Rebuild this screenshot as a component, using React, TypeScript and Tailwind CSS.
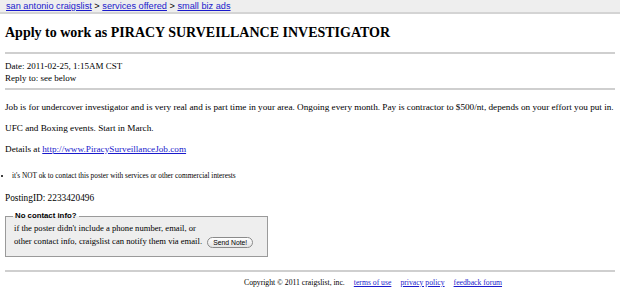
import React from "react";

const serif = "font-['Liberation_Serif','Times_New_Roman',serif]";
const sans = "font-['Liberation_Sans',Arial,sans-serif]";

const App: React.FC = () => {
  return (
    <div className={`w-[620px] h-[305px] bg-white text-black ${serif} overflow-hidden`}>
      {/* breadcrumb bar */}
      <div className={`h-[14px] bg-[#eeeeee] border-b-2 border-[#d4d4d4] px-[6px] ${sans} text-[9.2px] leading-[12px]`}>
        <a className="text-[#1a1acc] underline" href="#">san antonio craigslist</a>
        {" > "}
        <a className="text-[#1a1acc] underline" href="#">services offered</a>
        {" > "}
        <a className="text-[#1a1acc] underline" href="#">small biz ads</a>
      </div>

      <div className="px-[5px]">
        <h2 className="text-[14px] font-bold leading-[16px] mt-[11px]">
          Apply to work as PIRACY SURVEILLANCE INVESTIGATOR
        </h2>
        <hr className="mt-[11px] border-t-2 border-[#cfcfcf]" />

        <div className="leading-[12px] mt-[6px]">
          <div className="text-[9px]">Date: 2011-02-25, 1:15AM CST</div>
          <div className="text-[9px]">Reply to: see below</div>
        </div>
        <hr className="mt-[4px] border-t-2 border-[#cfcfcf]" />

        <div className="text-[9.2px] leading-[12px] mt-[11px] flex flex-col gap-[9px]">
          <p>
            Job is for undercover investigator and is very real and is part time in your area. Ongoing every month.
            Pay is contractor to $500/nt, depends on your effort you put in.
          </p>
          <p>UFC and Boxing events. Start in March.</p>
          <p>
            Details at{" "}
            <a className="text-[#1a1acc] underline" href="#">http://www.PiracySurveillanceJob.com</a>
          </p>
        </div>

        <ul className="mt-[15px] text-[7.3px] leading-[12px] list-disc pl-[7px]">
          <li>it's NOT ok to contact this poster with services or other commercial interests</li>
        </ul>

        <div className="text-[9.3px] leading-[12px] mt-[10px]">PostingID: 2233420496</div>

        <fieldset className="mt-[7px] w-[263px] bg-[#eeeeee] border border-[#9a9a9a] pl-[8px] pb-[8px] pt-[1px]">
          <legend className={`${sans} text-[7.8px] font-bold px-[2px] ml-[-1px] leading-[10px]`}>No contact info?</legend>
          <div className="text-[8.6px] leading-[13px]">
            if the poster didn't include a phone number, email, or
            <br />
            other contact info, craigslist can notify them via email.{" "}
            <span
              className={`inline-block ${sans} text-[6.8px] leading-[9px] px-[5px] border border-[#8a8a8a] rounded-full bg-gradient-to-b from-white to-[#e4e4e4] align-middle ml-[3px]`}
            >
              Send Note!
            </span>
          </div>
        </fieldset>

        <hr className="mt-[13px] border-t-2 border-[#cfcfcf]" />

        <div className="mt-[6px] flex gap-[9px] text-[7.7px] leading-[10px] pl-[239px]">
          <span>Copyright © 2011 craigslist, inc.</span>
          <a className="text-[#1a1acc] underline" href="#">terms of use</a>
          <a className="text-[#1a1acc] underline" href="#">privacy policy</a>
          <a className="text-[#1a1acc] underline" href="#">feedback forum</a>
        </div>
      </div>
    </div>
  );
};

export default App;
